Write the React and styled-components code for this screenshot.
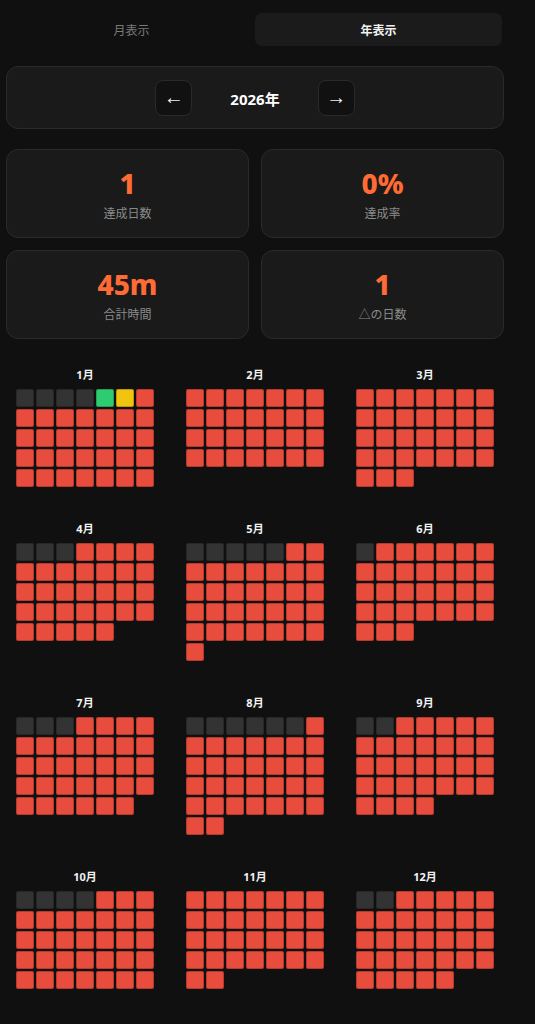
import React from "react";
import styled, { createGlobalStyle } from "styled-components";

const GlobalStyle = createGlobalStyle`
  body {
    margin: 0;
    background: #101010;
    font-family: "Noto Sans", "Noto Sans CJK JP", sans-serif;
  }
`;

const Page = styled.div`
  width: 498px;
  padding: 13px 0 40px 6px;
`;

const Tabs = styled.div`
  display: grid;
  grid-template-columns: 1fr 1fr;
  margin: 0 2px 0 2px;
`;

const Tab = styled.div`
  height: 33px;
  display: flex;
  align-items: center;
  justify-content: center;
  border-radius: 7px;
  font-size: 12px;
  font-family: "Noto Sans CJK JP", sans-serif;
  background: ${(p) => (p.$active ? "#1b1b1b" : "transparent")};
  color: ${(p) => (p.$active ? "#f2f2f2" : "#7a7a7a")};
  font-weight: ${(p) => (p.$active ? 700 : 400)};
`;

const Card = styled.div`
  background: #1a1a1a;
  border: 1px solid #2a2a2a;
  border-radius: 12px;
  box-sizing: border-box;
`;

const YearNav = styled(Card)`
  margin-top: 20px;
  height: 63px;
  display: flex;
  align-items: center;
  justify-content: center;
  gap: 38px;
`;

const ArrowButton = styled.button`
  width: 37px;
  height: 36px;
  border-radius: 8px;
  border: 1px solid #2a2a2a;
  background: #111111;
  color: #f0f0f0;
  font-size: 20px;
  line-height: 1;
  padding: 0 0 2px;
  display: flex;
  align-items: center;
  justify-content: center;
  font-family: "Liberation Sans", sans-serif;
`;

const YearLabel = styled.div`
  color: #ffffff;
  font-size: 15px;
  font-weight: 700;
  font-family: "Noto Sans", "Noto Sans CJK JP", sans-serif;
  padding-top: 1px;
`;

const StatGrid = styled.div`
  margin-top: 20px;
  display: grid;
  grid-template-columns: 1fr 1fr;
  column-gap: 12px;
  row-gap: 12px;
`;

const StatCard = styled(Card)`
  height: 89px;
  display: flex;
  flex-direction: column;
  align-items: center;
  justify-content: center;
  padding-top: 2px;
`;

const StatValue = styled.div`
  color: #ff6b35;
  font-size: 28px;
  font-weight: 800;
  font-family: "Noto Sans", sans-serif;
  line-height: 30px;
`;

const StatLabel = styled.div`
  margin-top: 7px;
  color: #8a8a8a;
  font-size: 12px;
  line-height: 16px;
  font-family: "Noto Sans CJK JP", sans-serif;
`;

const Months = styled.div`
  margin-top: 28px;
  padding-left: 10px;
  display: grid;
  grid-template-columns: repeat(3, 138px);
  column-gap: 32px;
  row-gap: 34px;
  align-items: start;
`;

const MonthBlock = styled.div`
  display: flex;
  flex-direction: column;
  align-items: center;
`;

const MonthTitle = styled.div`
  color: #f2f2f2;
  font-size: 11px;
  font-weight: 700;
  line-height: 16px;
  margin-bottom: 6px;
  font-family: "Noto Sans", "Noto Sans CJK JP", sans-serif;
`;

const DayGrid = styled.div`
  display: grid;
  grid-template-columns: repeat(7, 18px);
  grid-auto-rows: 18px;
  gap: 2px;
  width: 138px;
`;

const cellColors = {
  empty: "#333333",
  done: "#2ecc71",
  partial: "#f1c40f",
  miss: "#e74c3c",
};

const Day = styled.div`
  border-radius: 2px;
  box-sizing: border-box;
  border: 1px solid rgba(0, 0, 0, 0.22);
  background: ${(p) => cellColors[p.$status]};
`;

const statusFor = (month, day) => {
  if (month === 0 && day === 1) return "done";
  if (month === 0 && day === 2) return "partial";
  return "miss";
};

function Month({ month }) {
  const year = 2026;
  const offset = new Date(year, month, 1).getDay();
  const days = new Date(year, month + 1, 0).getDate();
  const cells = [];
  for (let i = 0; i < offset; i++) cells.push(<Day key={"e" + i} $status="empty" />);
  for (let d = 1; d <= days; d++) cells.push(<Day key={d} $status={statusFor(month, d)} />);
  return (
    <MonthBlock>
      <MonthTitle>{month + 1}月</MonthTitle>
      <DayGrid>{cells}</DayGrid>
    </MonthBlock>
  );
}

const stats = [
  { value: "1", label: "達成日数" },
  { value: "0%", label: "達成率" },
  { value: "45m", label: "合計時間" },
  { value: "1", label: "△の日数" },
];

export default function App() {
  return (
    <Page>
      <GlobalStyle />
      <Tabs>
        <Tab>月表示</Tab>
        <Tab $active>年表示</Tab>
      </Tabs>
      <YearNav>
        <ArrowButton>←</ArrowButton>
        <YearLabel>2026年</YearLabel>
        <ArrowButton>→</ArrowButton>
      </YearNav>
      <StatGrid>
        {stats.map((s) => (
          <StatCard key={s.label}>
            <StatValue>{s.value}</StatValue>
            <StatLabel>{s.label}</StatLabel>
          </StatCard>
        ))}
      </StatGrid>
      <Months>
        {Array.from({ length: 12 }, (_, m) => (
          <Month key={m} month={m} />
        ))}
      </Months>
    </Page>
  );
}
